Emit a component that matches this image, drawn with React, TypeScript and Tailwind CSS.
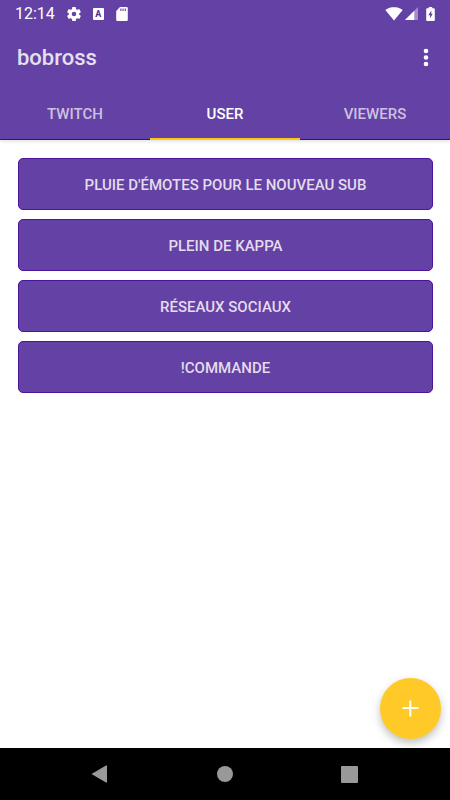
import { useState } from "react";

const tabs = ["Twitch", "User", "Viewers"];

const commands = [
  "Pluie d'émotes pour le nouveau sub",
  "Plein de kappa",
  "Réseaux sociaux",
  "!commande",
];

export default function App() {
  const [activeTab, setActiveTab] = useState("User");

  return (
    <div className="flex min-h-screen flex-col bg-white font-['Roboto',sans-serif]">
      <header className="bg-[#6441a4] shadow-[0_1px_4px_rgba(0,0,0,0.15)]">
        <StatusBar />
        <div className="flex h-[61px] items-center justify-between pr-3 pl-[17px]">
          <h1 className="pt-px text-[22px] leading-7 font-medium text-[#e6e0ee]">bobross</h1>
          <button type="button" aria-label="More options" className="flex h-10 w-6 items-center justify-center">
            <svg width="6" height="20" viewBox="0 0 6 20" fill="#fff" aria-hidden="true">
              <circle cx="3" cy="3" r="2.3" />
              <circle cx="3" cy="9.5" r="2.3" />
              <circle cx="3" cy="16" r="2.3" />
            </svg>
          </button>
        </div>
        <nav role="tablist" className="grid h-[52px] grid-cols-3 shadow-[inset_0_-1px_0_#3c0a8a]">
          {tabs.map((tab) => (
            <button
              key={tab}
              type="button"
              role="tab"
              aria-selected={tab === activeTab}
              onClick={() => setActiveTab(tab)}
              className={
                tab === activeTab
                  ? "border-b-2 border-[#ffc814] pt-[3px] text-[15px] font-medium text-white uppercase"
                  : "border-b-2 border-transparent pt-[3px] text-[15px] font-medium text-[#cdc1e2] uppercase"
              }
            >
              {tab}
            </button>
          ))}
        </nav>
      </header>

      <main className="relative flex-1 pt-[18px] pr-[17px] pb-20 pl-[18px]">
        <ul className="flex flex-col gap-[9px]">
          {commands.map((command) => (
            <li key={command}>
              <button
                type="button"
                className="h-[52px] w-full rounded-[5px] border border-[#4b149a] bg-[#6441a4] pt-[3px] text-[15px] font-medium text-[#e3dcec] uppercase"
              >
                {command}
              </button>
            </li>
          ))}
        </ul>

        <button
          type="button"
          aria-label="Add a command"
          className="absolute right-[9px] bottom-[9px] flex size-[61px] items-center justify-center rounded-full bg-[#ffca28] shadow-[0_4px_8px_rgba(0,0,0,0.25)]"
        >
          <svg width="17" height="17" viewBox="0 0 17 17" stroke="#fff" strokeWidth="2" aria-hidden="true">
            <path d="M8.3.5v16M.5 8h16" />
          </svg>
        </button>
      </main>

      <NavigationBar />
    </div>
  );
}

function StatusBar() {
  return (
    <div className="flex h-[27px] items-center justify-between px-[15px] text-white">
      <div className="flex items-center">
        <span className="mr-3 text-base leading-5">12:14</span>
        <svg className="mr-3" width="14" height="14" viewBox="2 2 20 20" fill="currentColor" aria-hidden="true">
          <path d="M19.43 12.98c.04-.32.07-.64.07-.98s-.03-.66-.07-.98l2.11-1.65c.19-.15.24-.42.12-.64l-2-3.46c-.12-.22-.39-.3-.61-.22l-2.49 1c-.52-.4-1.08-.73-1.69-.98l-.38-2.65A.49.49 0 0 0 14 2h-4c-.25 0-.46.18-.49.42l-.38 2.65c-.61.25-1.17.59-1.69.98l-2.49-1c-.23-.09-.49 0-.61.22l-2 3.46c-.13.22-.07.49.12.64l2.11 1.65c-.04.32-.07.65-.07.98s.03.66.07.98l-2.11 1.65c-.19.15-.24.42-.12.64l2 3.46c.12.22.39.3.61.22l2.49-1c.52.4 1.08.73 1.69.98l.38 2.65c.03.24.24.42.49.42h4c.25 0 .46-.18.49-.42l.38-2.65c.61-.25 1.17-.59 1.69-.98l2.49 1c.23.09.49 0 .61-.22l2-3.46c.12-.22.07-.49-.12-.64l-2.11-1.65zM12 15.2a3.2 3.2 0 1 1 0-6.4 3.2 3.2 0 0 1 0 6.4z" />
        </svg>
        <span className="mr-3 flex h-3 w-[11px] items-center justify-center rounded-[1px] bg-white text-[9px] leading-3 font-bold text-[#4b2a8c]">
          A
        </span>
        <svg width="12" height="14" viewBox="0 0 12 14" aria-hidden="true">
          <path d="M4 0h6.5a1.3 1.3 0 0 1 1.3 1.3v11.4a1.3 1.3 0 0 1-1.3 1.3h-9A1.3 1.3 0 0 1 .2 12.7V4z" fill="#fff" />
          <path d="M4.9 1.5v2.6M7.1 1.5v2.6M9.3 1.5v2.6" stroke="#6441a4" strokeWidth="1.1" />
        </svg>
      </div>
      <div className="flex items-center">
        <svg className="mr-[2px]" width="18" height="14" viewBox="0 0 18 14" fill="#fff" aria-hidden="true">
          <path d="M9 13.5L.3 3C.8 2.5 3.8.2 9 .2s8.2 2.3 8.7 2.8z" />
        </svg>
        <svg className="mr-2" width="13" height="13" viewBox="0 0 13 13" fill="#fff" aria-hidden="true">
          <path d="M0 13L13 0v13z" opacity="0.4" />
          <path d="M0 13L9.3 3.7V13z" />
        </svg>
        <svg width="9" height="14" viewBox="0 0 9 14" aria-hidden="true">
          <path d="M2.8 0h3.4v1.3h1.7c.5 0 .9.4.9.9v10.9c0 .5-.4.9-.9.9H1.1a.9.9 0 0 1-.9-.9V2.2c0-.5.4-.9.9-.9h1.7z" fill="#fff" />
          <path d="M5.3 3.5L2.4 8.2h1.7v3.3l2.6-4.7H5.3z" fill="#6441a4" />
        </svg>
      </div>
    </div>
  );
}

function NavigationBar() {
  return (
    <nav aria-label="System" className="bg-black">
      <div className="mx-auto grid h-[52px] w-5/6 grid-cols-3">
        <button type="button" aria-label="Back" className="flex items-center justify-center">
          <svg width="18" height="18" viewBox="0 0 18 18" fill="#999" aria-hidden="true">
            <path d="M.5 9L15 .4c.6-.3 1 0 1 .5v16.2c0 .5-.4.8-1 .5z" />
          </svg>
        </button>
        <button type="button" aria-label="Home" className="flex items-center justify-center">
          <svg width="16" height="16" viewBox="0 0 16 16" fill="#999" aria-hidden="true">
            <circle cx="8" cy="8" r="8" />
          </svg>
        </button>
        <button type="button" aria-label="Recent apps" className="flex items-center justify-center">
          <svg width="18" height="17" viewBox="0 0 18 17" fill="#999" aria-hidden="true">
            <rect width="17" height="17" rx="1" />
          </svg>
        </button>
      </div>
    </nav>
  );
}
